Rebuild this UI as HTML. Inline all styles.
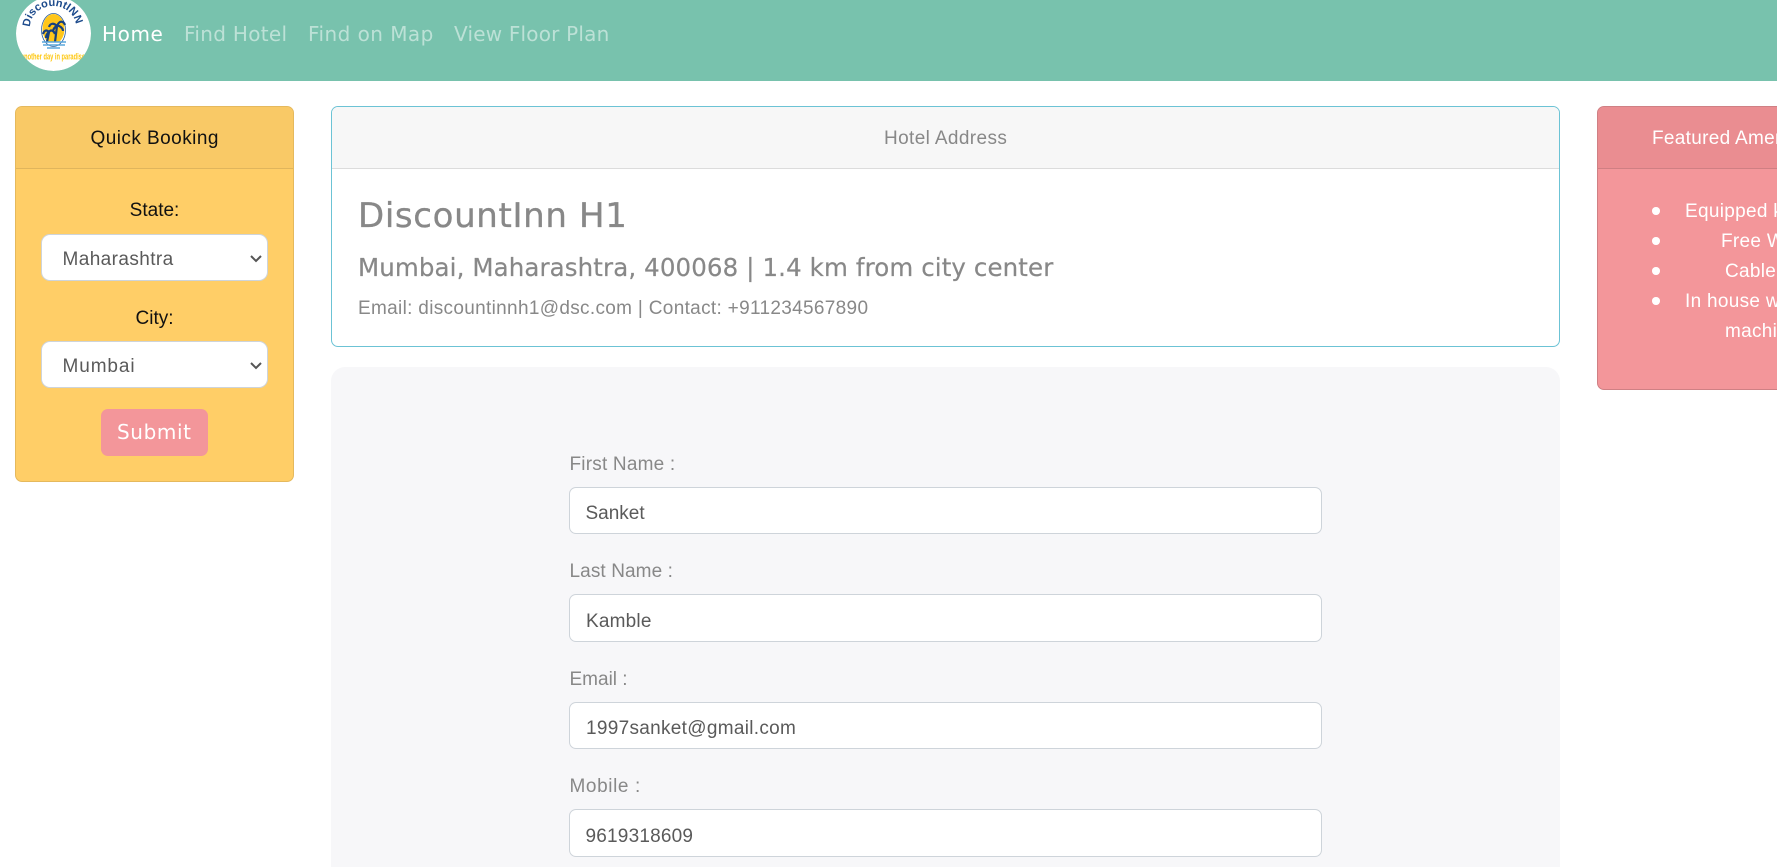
<!DOCTYPE html>
<html lang="en"><head><meta charset="utf-8"><title>DiscountInn H1</title>
<style>
html,body{margin:0;padding:0;width:1777px;height:867px;overflow:hidden;background:#fff}
body{position:relative;font-family:"Liberation Sans",sans-serif;font-size:19px}
.b{position:absolute;box-sizing:border-box}
.t{position:absolute;white-space:nowrap;line-height:20px;height:20px}
.m{font-family:"DejaVu Sans",sans-serif}
.c{transform:translateX(-50%)}
.g{color:#888}
.v{color:#5a5a5a}
.inp{background:#fff;border:1px solid #ced4da;border-radius:7px;left:569px;width:753px}
.sel{background:#fff;border:1px solid #ced4da;border-radius:9px;left:41px;width:227px;height:47px}
svg{position:absolute;display:block}
</style></head><body>
<nav class="b" style="left:0;top:0;width:1777px;height:81px;background:#78c2ad"></nav>
<svg style="left:0;top:0" width="110" height="81" viewBox="0 0 110 81">
<defs><clipPath id="cc"><circle cx="53.5" cy="33.5" r="37.5"/></clipPath><clipPath id="sky"><rect x="40" y="12" width="28" height="30"/></clipPath><path id="arc" d="M30 27 A23 21 0 0 1 76 27"/></defs>
<g clip-path="url(#cc)">
<circle cx="53.5" cy="33.5" r="37.5" fill="#fff"/>
<text font-family="Liberation Sans" font-weight="700" font-size="11" fill="#1c4a8c" textLength="66"><textPath href="#arc" textLength="66" lengthAdjust="spacing">DiscountINN</textPath></text>
<ellipse cx="53.500" cy="30" rx="12" ry="16.500" fill="#fff" stroke="#2b5c9c" stroke-width=".8"/>
<ellipse cx="53.500" cy="29" rx="11" ry="15" fill="#ffc61a" clip-path="url(#sky)"/>
<path d="M55 42 L57 26 M57 26 C53 22 50 24 49 27 M57 26 C60 19 64 22 65 25 M57 26 C59 25 63 28 63 31 M57 26 C55 27 53 29 53 32 M47 42 L49 32 M49 32 C46 29 44 31 43 34 M49 32 C51 29 54 31 55 34 M49 32 C47 33 46 36 46 38" fill="none" stroke="#17407f" stroke-width="2.2"/>
<path d="M42 42 H66 M43 45 H65 M47 48 H60" stroke="#5aa7dc" stroke-width="1.5"/>
<text x="53" y="59.5" text-anchor="middle" font-family="Liberation Sans" font-weight="700" font-size="9.500" fill="#fec70f" textLength="64" lengthAdjust="spacingAndGlyphs">another day in paradise</text>
</g></svg>
<a class="t m" style="left:102px;top:24px;font-size:20px;color:#fff;letter-spacing:.6px">Home</a>
<a class="t m" style="left:184px;top:24px;font-size:20px;letter-spacing:.31px;color:rgba(255,255,255,.5)">Find Hotel</a>
<a class="t m" style="left:308px;top:24px;font-size:20px;letter-spacing:.45px;color:rgba(255,255,255,.5)">Find on Map</a>
<a class="t m" style="left:454px;top:24px;font-size:20px;letter-spacing:.2px;color:rgba(255,255,255,.5)">View Floor Plan</a>

<!-- Quick booking -->
<div class="b" style="left:15px;top:106px;width:279px;height:376px;background:#ffce67;border:1px solid #e5b95d;border-radius:7px;overflow:hidden">
<div class="b" style="left:0;top:0;width:277px;height:62px;background:#f9c966;border-bottom:1px solid #e0b55c"></div></div>
<div class="t" style="left:90.5px;top:129px;color:#111;letter-spacing:.45px">Quick Booking</div>
<div class="t c" style="left:154.5px;top:201px;color:#111">State:</div>
<div class="b sel" style="top:234px"></div>
<div class="t" style="left:62.5px;top:250px;color:#5a5a5a;letter-spacing:.4px">Maharashtra</div>
<svg style="left:249px;top:254px" width="14" height="9" viewBox="0 0 14 9"><path d="M2 2 L7 7 L12 2" fill="none" stroke="#555" stroke-width="2"/></svg>
<div class="t c" style="left:154.5px;top:309px;color:#111">City:</div>
<div class="b sel" style="top:341px"></div>
<div class="t" style="left:62.5px;top:357px;color:#5a5a5a;letter-spacing:.9px">Mumbai</div>
<svg style="left:249px;top:361px" width="14" height="9" viewBox="0 0 14 9"><path d="M2 2 L7 7 L12 2" fill="none" stroke="#555" stroke-width="2"/></svg>
<div class="b" style="left:101px;top:409px;width:107px;height:47px;background:#f3969a;border-radius:7px"></div>
<div class="t m" style="left:117px;top:422px;font-size:20px;letter-spacing:.6px;color:#fff">Submit</div>

<!-- Hotel address -->
<div class="b" style="left:331px;top:106px;width:1229px;height:241px;background:#fff;border:1px solid #6cc3d5;border-radius:7px;overflow:hidden">
<div class="b" style="left:0;top:0;width:1227px;height:62px;background:#f7f7f7;border-bottom:1px solid #dcdcdc"></div></div>
<div class="t g" style="left:884px;top:129px;letter-spacing:.38px">Hotel Address</div>
<h1 class="t m g" style="margin:0;left:358px;top:206px;font-size:34px;font-weight:400;letter-spacing:.65px;-webkit-text-stroke:.3px #888">DiscountInn H1</h1>
<h2 class="t m g" style="margin:0;left:358px;top:258px;font-size:24.500px;font-weight:400;letter-spacing:.11px;-webkit-text-stroke:.2px #888">Mumbai, Maharashtra, 400068 | 1.4 km from city center</h2>
<div class="t g" style="left:358px;top:299px;letter-spacing:.32px">Email: discountinnh1@dsc.com | Contact: +911234567890</div>

<!-- Form -->
<div class="b" style="left:331px;top:367px;width:1229px;height:540px;background:#f7f7f9;border-radius:14px"></div>
<label class="t g" style="left:569.5px;top:455px;letter-spacing:.2px">First Name :</label>
<div class="b inp" style="top:487px;height:47px"></div>
<div class="t v" style="left:585.5px;top:504px">Sanket</div>
<label class="t g" style="left:569.5px;top:562px;letter-spacing:.1px">Last Name :</label>
<div class="b inp" style="top:594px;height:48px"></div>
<div class="t v" style="left:586px;top:612px;letter-spacing:.2px">Kamble</div>
<label class="t g" style="left:569.5px;top:670px">Email :</label>
<div class="b inp" style="top:702px;height:47px"></div>
<div class="t v" style="left:586px;top:719px;letter-spacing:.3px">1997sanket@gmail.com</div>
<label class="t g" style="left:569.5px;top:777px;letter-spacing:.6px">Mobile :</label>
<div class="b inp" style="top:809px;height:48px"></div>
<div class="t v" style="left:585.5px;top:827px;letter-spacing:.2px">9619318609</div>

<!-- Amenities -->
<div class="b" style="left:1597px;top:106px;width:279px;height:284px;background:#f3969a;border:1px solid #cf8084;border-radius:7px;overflow:hidden">
<div class="b" style="left:0;top:0;width:277px;height:62px;background:#ea8d91;border-bottom:1px solid #cf7f83"></div></div>
<div class="t" style="left:1652px;top:129px;color:#fff;letter-spacing:.3px">Featured Amenities</div>
<div class="b" style="left:1652px;top:207px;width:7.500px;height:7.500px;border-radius:50%;background:#fff"></div>
<div class="b" style="left:1652px;top:237px;width:7.500px;height:7.500px;border-radius:50%;background:#fff"></div>
<div class="b" style="left:1652px;top:267px;width:7.500px;height:7.500px;border-radius:50%;background:#fff"></div>
<div class="b" style="left:1652px;top:297px;width:7.500px;height:7.500px;border-radius:50%;background:#fff"></div>
<div class="t" style="left:1685px;top:202px;color:#fff;letter-spacing:.3px">Equipped kitchen</div>
<div class="t" style="left:1721px;top:232px;color:#fff;letter-spacing:.3px">Free WiFi</div>
<div class="t" style="left:1725px;top:262px;color:#fff;letter-spacing:.3px">Cable TV</div>
<div class="t" style="left:1685px;top:292px;color:#fff;letter-spacing:.3px">In house washing</div>
<div class="t" style="left:1725px;top:322px;color:#fff;letter-spacing:.3px">machine</div>
</body></html>
